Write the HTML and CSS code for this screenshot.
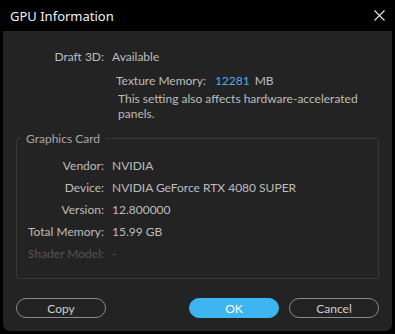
FILE: index.html
```html
<!DOCTYPE html>
<html lang="en">
<head>
    <meta charset="UTF-8">
    <title>GPU Information</title>
    <link rel="stylesheet" href="styles.css">
</head>
<body>
    <div class="window">
        <div class="titlebar">
            <span class="title">GPU Information</span>
            <svg class="close" width="11" height="11" viewBox="0 0 11 11">
                <path d="M0.5 0.5 L10.5 10.5 M10.5 0.5 L0.5 10.5" stroke="#e6e6e6" stroke-width="1.1" fill="none"/>
            </svg>
        </div>
        <div class="panel">
            <div class="field draft">
                <span class="label">Draft 3D:</span>
                <span class="value">Available</span>
            </div>
            <div class="texture">
                <div class="texture-line">
                    Texture Memory:<span class="mem">12281</span>MB
                </div>
                <p class="note">This setting also affects hardware-accelerated panels.</p>
            </div>
            <fieldset class="group">
                <legend>Graphics Card</legend>
                <div class="field">
                    <span class="label">Vendor:</span>
                    <span class="value">NVIDIA</span>
                </div>
                <div class="field">
                    <span class="label">Device:</span>
                    <span class="value">NVIDIA GeForce RTX 4080 SUPER</span>
                </div>
                <div class="field">
                    <span class="label">Version:</span>
                    <span class="value">12.800000</span>
                </div>
                <div class="field">
                    <span class="label">Total Memory:</span>
                    <span class="value">15.99 GB</span>
                </div>
                <div class="field disabled">
                    <span class="label">Shader Model:</span>
                    <span class="value">-</span>
                </div>
            </fieldset>
            <div class="buttons">
                <button class="btn">Copy</button>
                <span class="spacer"></span>
                <button class="btn primary">OK</button>
                <button class="btn">Cancel</button>
            </div>
        </div>
    </div>
</body>
</html>
```

FILE: styles.css
```css
html, body {
    margin: 0;
    padding: 0;
    background: #000;
}
body {
    font-family: Lato, "Noto Sans", sans-serif;
    font-size: 12px;
    color: #bdbdbd;
}
.window {
    width: 395px;
    height: 334px;
    background: #000;
    border-radius: 8px;
    overflow: hidden;
    display: flex;
    flex-direction: column;
}
.titlebar {
    height: 31px;
    flex: none;
    display: flex;
    align-items: center;
    justify-content: space-between;
    padding: 0 10px 0 10px;
    box-sizing: border-box;
}
.title {
    font-family: "Noto Sans", sans-serif;
    font-size: 13px;
    color: #f0f0f0;
}
.panel {
    flex: 1;
    margin: 0 3px 3px 3px;
    background: #232323;
    border-radius: 0 0 7px 7px;
    padding-top: 14px;
}
.field {
    display: flex;
    gap: 8px;
    height: 22px;
    align-items: center;
}
.label {
    width: 101px;
    text-align: right;
    flex: none;
}
.texture {
    margin-left: 113px;
    margin-top: 4px;
}
.texture-line {
    height: 20px;
    line-height: 20px;
}
.mem {
    color: #4faee6;
    margin: 0 5px 0 9px;
}
.note {
    margin: 0 0 0 2px;
    width: 240px;
    line-height: 15px;
}
.group {
    margin: 10px 13px 0 13px;
    padding: 8px 0 14px 0;
    border: 1px solid #383838;
    border-radius: 2px;
}
.group legend {
    padding: 0 5px;
    margin-left: 4px;
    color: #a8a8a8;
}
.group .label {
    width: 87px;
}
.disabled {
    color: #555;
}
.buttons {
    display: flex;
    gap: 10px;
    margin: 19px 13px 0 13px;
}
.spacer {
    flex: 1;
}
.btn {
    width: 90px;
    height: 20px;
    border: 1px solid #8a8a8a;
    border-radius: 10px;
    background: transparent;
    color: #cfcfcf;
    font-family: Lato, "Noto Sans", sans-serif;
    font-size: 12px;
    padding: 0;
}
.btn.primary {
    background: #3db5f2;
    border-color: #3db5f2;
    color: #fff;
}
```
